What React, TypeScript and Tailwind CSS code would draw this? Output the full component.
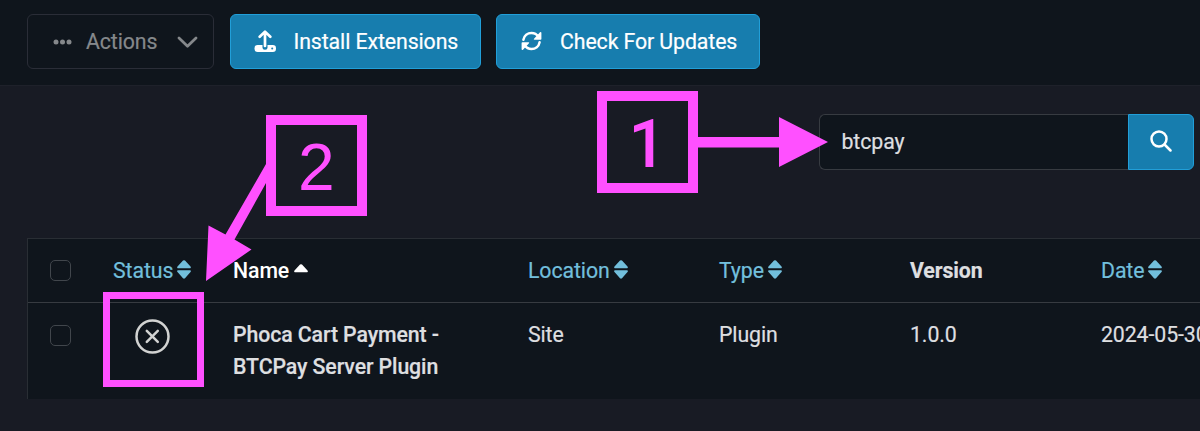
import React from "react";

const SortIcon = () => (
  <svg className="mb-[2px] ml-1 h-[19px] w-[14px] shrink-0" viewBox="0 0 14 19" fill="#72bfdc">
    <path d="M1.2 8.3C.2 8.300-.2 7.200.5 6.500L6 .6q1-.9 2 0L13.500 6.500c.7.7.3 1.800-.7 1.800zM1.200 10.300h11.600c1 0 1.400 1.100.7 1.800L8 18.300q-1 .9-2 0L.5 12.100c-.7-.7-.3-1.800.7-1.800z" />
  </svg>
);

const UploadIcon = () => (
  <svg className="h-[23px] w-[22px]" viewBox="0 0 22 23" fill="none">
    <rect x="0.500" y="15" width="21.500" height="7" rx="3.200" fill="#fff" />
    <path d="M11 17.300V5" stroke="#177dae" strokeWidth="5" strokeLinecap="round" />
    <path d="M11 16V2M5.700 6.800L11 1.600l5.300 5.200" stroke="#fff" strokeWidth="2.700" strokeLinecap="round" strokeLinejoin="round" />
    <circle cx="18.200" cy="18.400" r="1" fill="#177dae" />
  </svg>
);

const SyncIcon = () => (
  <svg className="mb-px h-5 w-[21px]" viewBox="0 0 21 20" fill="none">
    <path d="M2.400 8.800C3.200 4.600 6.600 2 10.500 2c3 0 5.300 1.300 6.900 3.700M18.600 11.200C17.800 15.400 14.400 18 10.500 18c-3 0-5.300-1.300-6.900-3.700" stroke="#fff" strokeWidth="2.500" strokeLinecap="round" />
    <path d="M19 1.200q1.400-.7 1.400.7v6q0 .8-.8.8h-6q-1.400 0-.6-1zM2 18.800q-1.400.7-1.400-.7v-6q0-.8.8-.8h6q1.400 0 .6 1z" fill="#fff" />
  </svg>
);

const Checkbox = () => <span className="block h-[21px] w-[21px] rounded-[5px] border border-[#41464c]" />;

export default function App() {
  return (
    <div className="relative h-[431px] w-[1200px] overflow-hidden bg-[#181b24] font-['Roboto',sans-serif] text-[21.300px] leading-[31.700px] tracking-[-0.100px] text-[#dedfe0] [-webkit-text-stroke:0.200px_currentColor]">
      <header className="flex h-[86px] items-start gap-[15.500px] border-b border-[#1e212a] bg-[#0f151c] pl-[27px] pt-[14px]">
        <button className="flex h-[55px] w-[187px] items-center rounded-[6px] border border-[#2a2d37] pl-[25px] text-[#85888b]">
          <svg className="h-[6px] w-[19px]" viewBox="0 0 19 6" fill="currentColor">
            <circle cx="3" cy="3" r="2.500" />
            <circle cx="9.500" cy="3" r="2.500" />
            <circle cx="16" cy="3" r="2.500" />
          </svg>
          <span className="ml-[14px]">Actions</span>
          <svg className="ml-5 h-3 w-[21px]" viewBox="0 0 21 12" fill="none" stroke="currentColor" strokeWidth="2.700" strokeLinecap="round" strokeLinejoin="round">
            <path d="M2 2l8.500 8.300L19 2" />
          </svg>
        </button>
        <button className="flex h-[55px] w-[251px] items-center rounded-[6px] border border-[#219fd9] bg-[#177dae] pl-[23px] text-white">
          <UploadIcon />
          <span className="ml-[18px]">Install Extensions</span>
        </button>
        <button className="flex h-[55px] w-[264px] items-center rounded-[6px] border border-[#219fd9] bg-[#177dae] pl-[24px] text-white">
          <SyncIcon />
          <span className="ml-[18px]">Check For Updates</span>
        </button>
      </header>

      <div className="flex pl-[819px] pt-[28px]">
        <div className="flex h-14 w-[309px] items-center rounded-l-[6px] border border-r-0 border-[#373b41] bg-[#0f151c] pb-px pl-[21.500px]">btcpay</div>
        <button className="flex h-14 w-[66px] items-center justify-center rounded-r-[6px] border border-[#219fd9] bg-[#177dae]">
          <svg className="mb-[3px] h-[22px] w-[22px]" viewBox="0 0 22 22" fill="none" stroke="#fff" strokeWidth="2.500" strokeLinecap="round">
            <circle cx="9" cy="9" r="7.500" />
            <path d="M14.500 14.500l6 6" />
          </svg>
        </button>
      </div>

      <main className="ml-[27px] mt-[68px] h-[161px] border-l border-t border-[#292e34] bg-[#0f151c]">
        <div className="grid h-[64px] grid-cols-[85px_120px_295px_191px_191px_191px_99px] items-center border-b border-[#373b41] text-[#72bfdc]">
          <div className="pl-[22px]"><Checkbox /></div>
          <div className="flex items-center pt-px">Status<SortIcon /></div>
          <div className="flex items-center pt-px font-medium text-white [-webkit-text-stroke:0]">
            Name
            <svg className="mb-1 ml-[5px] h-[9px] w-[14px]" viewBox="0 0 14 9" fill="currentColor">
              <path d="M1.200 8.300c-1 0-1.400-1.100-.7-1.800L6 .6q1-.9 2 0l5.500 5.900c.7.7.3 1.800-.7 1.800z" />
            </svg>
          </div>
          <div className="flex items-center pt-px">Location<SortIcon /></div>
          <div className="flex items-center pt-px">Type<SortIcon /></div>
          <div className="pt-px font-bold text-[#dedfe0]">Version</div>
          <div className="flex items-center pt-px">Date<SortIcon /></div>
        </div>
        <div className="grid grid-cols-[85px_120px_295px_191px_191px_191px_99px] items-start pt-4">
          <div className="pl-[22px] pt-[6px]"><Checkbox /></div>
          <div className="pl-[22px]">
            <svg className="h-[35px] w-[35px]" viewBox="0 0 35 35" fill="none" stroke="#d2d3d2" strokeWidth="2.500" strokeLinecap="round">
              <circle cx="17.500" cy="17.500" r="16" />
              <path d="M11.800 11.800l11 11M22.800 11.800l-11 11" />
            </svg>
          </div>
          <div className="font-medium">Phoca Cart Payment -<br />BTCPay Server Plugin</div>
          <div>Site</div>
          <div>Plugin</div>
          <div>1.0.0</div>
          <div className="whitespace-nowrap">2024-05-30</div>
        </div>
      </main>

      <div className="absolute left-[597px] top-[91px] flex h-[102px] w-[100.500px] items-center justify-center border-[10px] border-[#ff50ff] pt-[5px] text-[66px] font-medium leading-none text-[#ff50ff] [-webkit-text-stroke:0]">1</div>
      <div className="absolute left-[266px] top-[115px] flex h-[101px] w-[100.500px] items-center justify-center border-[10px] border-[#ff50ff] pt-[3px] font-['Liberation_Sans',sans-serif] text-[66px] leading-none text-[#ff50ff] [-webkit-text-stroke:0]">2</div>
      <div className="absolute left-[103px] top-[292px] h-[95px] w-[101px] border-[7px] border-[#ff50ff]" />
      <svg className="pointer-events-none absolute left-0 top-0 h-[431px] w-[1200px]" viewBox="0 0 1200 431" fill="#ff50ff">
        <path d="M697 137h82v-20l49 25-49 25v-19.500h-82z" />
        <path d="M266 164v19L234.500 239.500l17 10L206 281l2.500-55.500 17 9z" />
      </svg>
    </div>
  );
}
